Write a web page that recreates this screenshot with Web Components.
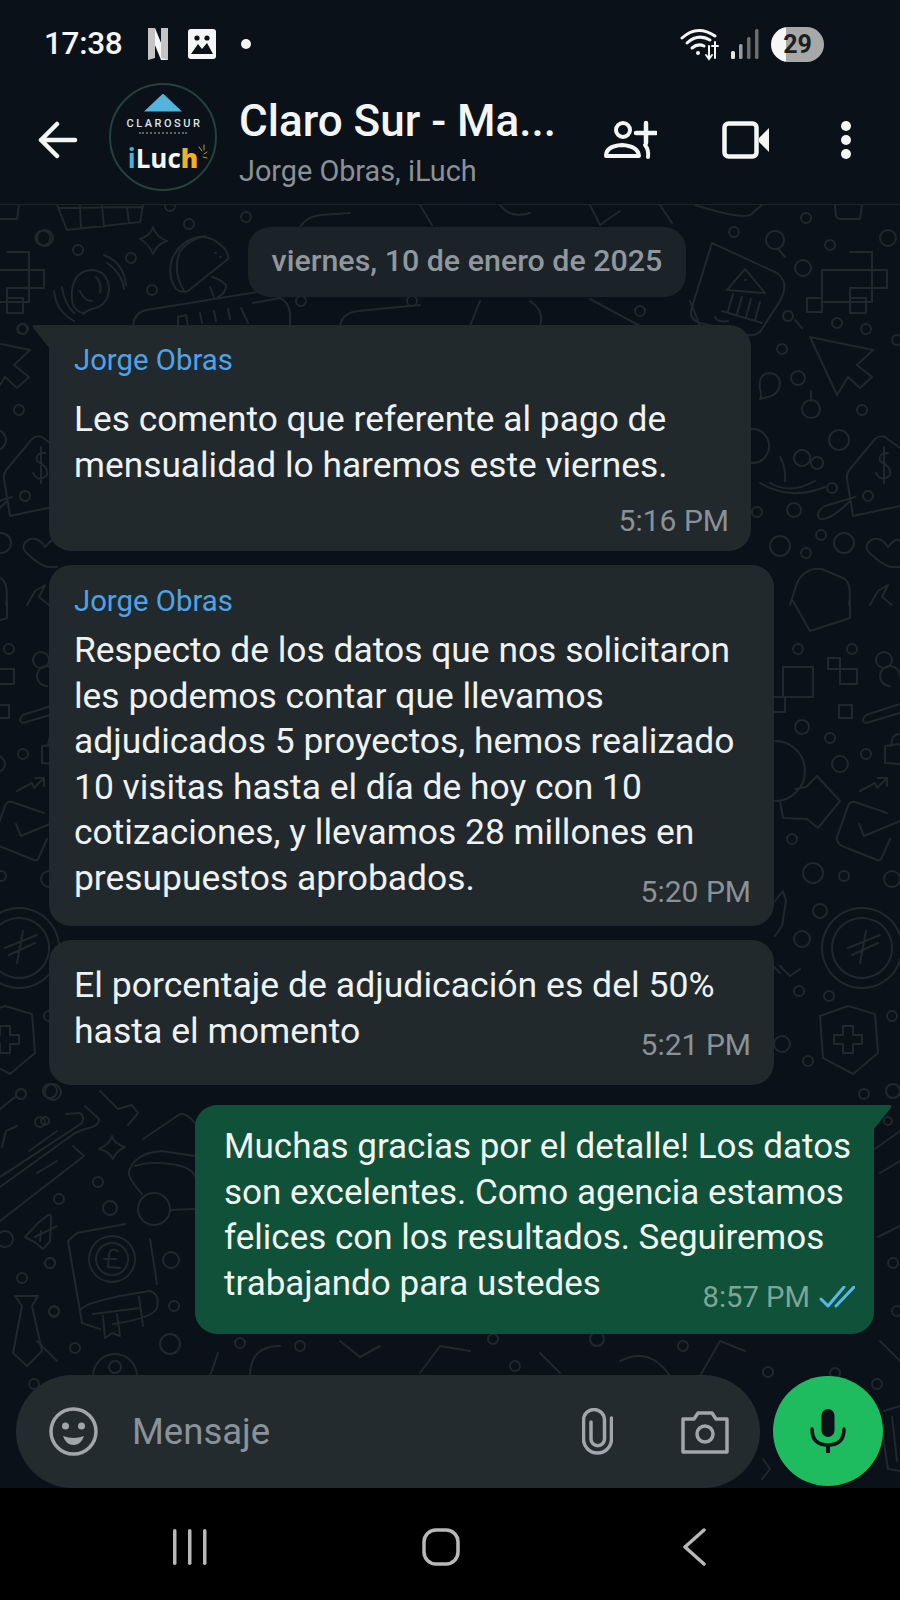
<!DOCTYPE html>
<html lang="es">
<head>
<meta charset="utf-8">
<title>Claro Sur</title>
<style>
    html, body { margin: 0; padding: 0; background: #000; }
    body { width: 900px; height: 1600px; overflow: hidden; font-family: Roboto, "Liberation Sans", sans-serif; }
    wa-app { height: 1600px; }
</style>
</head>
<body>
<wa-app>
    <status-bar></status-bar>
    <chat-header title="Claro Sur - Ma..." subtitle="Jorge Obras, iLuch"></chat-header>
    <chat-view>
        <date-chip>viernes, 10 de enero de 2025</date-chip>
        <msg-bubble sender="Jorge Obras" time="5:16 PM" tail stacked style="--w:702px; --mt:28px; --pt:17px; --sender-gap:19px; --fs:35.3px;">Les comento que referente al pago de<br>mensualidad lo haremos este viernes.</msg-bubble>
        <msg-bubble sender="Jorge Obras" time="5:20 PM" style="--w:725px; --mt:14px; --pt:18px; --sender-gap:9px; --fs:35.4px;">Respecto de los datos que nos solicitaron<br>les podemos contar que llevamos<br>adjudicados 5 proyectos, hemos realizado<br>10 visitas hasta el día de hoy con 10<br>cotizaciones, y llevamos 28 millones en<br>presupuestos aprobados.</msg-bubble>
        <msg-bubble time="5:21 PM" style="--w:725px; --mt:14px; --pt:23px; --pb:31px; --fs:35.6px;">El porcentaje de adjudicación es del 50%<br>hasta el momento</msg-bubble>
        <msg-bubble time="8:57 PM" out tail read style="--w:679px; --mt:20px; --pt:19px; --pb:28px; --fs:35px; --time-fs:29.2px;">Muchas gracias por el detalle! Los datos<br>son excelentes. Como agencia estamos<br>felices con los resultados. Seguiremos<br>trabajando para ustedes</msg-bubble>
        <input-bar placeholder="Mensaje"></input-bar>
    </chat-view>
    <nav-bar></nav-bar>
</wa-app>

<script>
class WaApp extends HTMLElement {
    constructor() {
        super();
        this.attachShadow({ mode: 'open' });
        this.shadowRoot.innerHTML = `
            <style>
                :host { display: flex; flex-direction: column; width: 900px; background: #0a1118; color: #eef1f2; }
            </style>
            <slot></slot>
        `;
    }
}

class StatusBar extends HTMLElement {
    constructor() {
        super();
        this.attachShadow({ mode: 'open' });
        this.shadowRoot.innerHTML = `
            <style>
                :host { display: flex; align-items: center; height: 62px; padding: 13px 76px 0 44px; box-sizing: content-box; }
                .time { font-size: 31.5px; font-weight: 500; color: #f4f5f5; letter-spacing: -0.3px; line-height: 38px; }
                .n { margin-left: 25px; }
                .pic { margin-left: 19px; }
                .dot { width: 10px; height: 10px; border-radius: 50%; background: #f4f5f5; margin-left: 25px; }
                .spacer { flex: 1; }
                .signal { margin-left: 10px; }
                .battery {
                    margin-left: 12px; width: 53px; height: 35px; border-radius: 18px;
                    background: linear-gradient(90deg, #f6f6f6 0, #f6f6f6 15px, #a8a8a8 15px);
                    color: #1b1f22; font-size: 25px; font-weight: 700; line-height: 35px; text-align: center;
                }
            </style>
            <span class="time">17:38</span>
            <svg class="n" width="22" height="34" viewBox="0 0 22 34">
                <path d="M1 1h7l13 32h-7z" fill="#f6f6f6"/>
                <path d="M1 1h7v30l-7 2z" fill="#c4c4c4"/>
                <path d="M14 1h7v32l-7-2z" fill="#c4c4c4"/>
            </svg>
            <svg class="pic" width="28" height="30" viewBox="0 0 28 30">
                <rect width="28" height="30" rx="3" fill="#f6f6f6"/>
                <circle cx="9" cy="9" r="2.6" fill="#0a1118"/><circle cx="19" cy="9" r="2.6" fill="#0a1118"/>
                <path d="M3 25 L10 15 L14 20 L19 14 L25 25 Z" fill="#0a1118"/>
            </svg>
            <span class="dot"></span>
            <span class="spacer"></span>
            <svg width="40" height="34" viewBox="0 0 40 34" fill="none" stroke="#f4f5f5" stroke-linecap="round">
                <path d="M2 11 Q17 -3 35 9" stroke-width="3"/>
                <path d="M7 16 Q18 6 30 13" stroke-width="3"/>
                <path d="M12 21 Q18 16 24 19" stroke-width="3"/>
                <circle cx="18" cy="26" r="2" fill="#f4f5f5" stroke="none"/>
                <path d="M29 19 V32 M26 28 L29 32 L32 28" stroke-width="2"/>
                <path d="M35 15 V31 M32 19 L38 19" stroke-width="2"/>
            </svg>
            <svg class="signal" width="29" height="30" viewBox="0 0 29 30">
                <rect x="1" y="22" width="4" height="8" rx="1.5" fill="#e6e6e6"/>
                <rect x="9" y="15" width="3.5" height="15" rx="1.5" fill="#9c9c9c"/>
                <rect x="17" y="8" width="3.5" height="22" rx="1.5" fill="#6d6d6d"/>
                <rect x="25" y="0" width="3.5" height="30" rx="1.5" fill="#6d6d6d"/>
            </svg>
            <span class="battery">29</span>
        `;
    }
}

class ChatHeader extends HTMLElement {
    constructor() {
        super();
        this.attachShadow({ mode: 'open' });
    }

    connectedCallback() {
        this.shadowRoot.innerHTML = `
            <style>
                :host { display: flex; align-items: center; height: 129px; padding: 0 0 0 38px; border-bottom: 1px solid #1c2329; position: relative; z-index: 2; background: #0a1118; }
                .avatar {
                    width: 108px; height: 108px; box-sizing: border-box; border-radius: 50%; border: 2px solid #26403d;
                    margin-left: 31px; margin-top: -6px; flex: none;
                    display: flex; flex-direction: column; align-items: center; padding-top: 9px;
                }
                .roof { width: 38px; height: 18px; background: #53b4de; clip-path: polygon(50% 0, 100% 100%, 0 100%); }
                .brand { font: 500 11px/14px Roboto, sans-serif; letter-spacing: 2.5px; color: #dfe3e4; margin-top: 5px; margin-right: -3px; }
                .tag { width: 48px; border-top: 2px dotted #5d6468; margin-top: 1px; }
                .iluch { font: 700 26px/30px "Liberation Sans Narrow", "Open Sans", Roboto, sans-serif; color: #f3f5f6; margin-top: 9px; display: flex; align-items: center; }
                .iluch i { font-style: normal; color: #46b3df; }
                .iluch b { color: #f0b12a; }
                .iluch svg { margin-right: -10px; margin-top: -8px; }
                .text { margin-left: 22px; margin-top: 6px; width: 334px; flex: none; display: flex; flex-direction: column; }
                .title { font-size: 44px; font-weight: 500; line-height: 48px; color: #f4f6f6; white-space: nowrap; }
                .sub { font-size: 28.8px; line-height: 34px; color: #8b9297; margin-top: 9px; white-space: nowrap; }
                .actions { display: flex; align-items: center; margin-left: 30px; }
                .video { margin-left: 65px; }
                .more { margin-left: 70px; }
                svg { display: block; }
            </style>
            <svg width="40" height="38" viewBox="0 0 40 38" fill="none" stroke="#f4f6f6" stroke-width="4.5" stroke-linecap="round" stroke-linejoin="round">
                <path d="M37 19 H3 M19 3 L3 19 L19 35"/>
            </svg>
            <div class="avatar">
                <div class="roof"></div>
                <div class="brand">CLAROSUR</div>
                <div class="tag"></div>
                <div class="iluch"><i>i</i>Luc<b>h</b>
                    <svg width="10" height="20" viewBox="0 0 10 20" fill="none" stroke="#b99a3a" stroke-width="1" stroke-linecap="round">
                        <path d="M1 3 L4 7 M6 1 L6 6 M9 8 L6 10 M9 14 L5 13"/>
                    </svg>
                </div>
            </div>
            <div class="text">
                <div class="title">${this.getAttribute('title')}</div>
                <div class="sub">${this.getAttribute('subtitle')}</div>
            </div>
            <div class="actions">
                <svg width="54" height="40" viewBox="0 0 54 40" fill="none" stroke="#f4f6f6" stroke-width="4" stroke-linecap="round">
                    <circle cx="20" cy="10" r="7"/>
                    <path d="M3 36 Q3 26 19 25 Q35 26 36 36 Z" stroke-linejoin="round"/>
                    <path d="M42 25 Q46 30 45 37"/>
                    <path d="M33 13 H53 M43 3 V23" stroke-width="4.5"/>
                </svg>
                <svg class="video" width="48" height="40" viewBox="0 0 48 40">
                    <rect x="2.5" y="3.5" width="32" height="33" rx="4" fill="none" stroke="#f4f6f6" stroke-width="4.5"/>
                    <path d="M37 18 L47 8 V32 L37 22 Z" fill="#f4f6f6"/>
                </svg>
                <svg class="more" width="12" height="38" viewBox="0 0 12 38" fill="#f4f6f6">
                    <circle cx="6" cy="5" r="5"/><circle cx="6" cy="19" r="5"/><circle cx="6" cy="33" r="5"/>
                </svg>
            </div>
        `;
    }
}

class ChatWallpaper extends HTMLElement {
    constructor() {
        super();
        this.attachShadow({ mode: 'open' });
    }

    connectedCallback() {
        // [x, y, r] of the small rings scattered over the pattern
        const rings = [
            [43,237,7.5],[78,249,5],[131,257,5],[189,223,5],[246,216,5],[152,289,5],[22,328,5],[170,205,5],
            [734,231,5],[806,217,5],[830,244,5],[803,267,8],[888,237,8],[837,322,5],[866,328,5],[782,348,5],
            [798,377,7],[862,409,5],[839,439,10],[832,487,5],[794,509,7],[757,511,5],[780,545,10],[821,534,5],
            [844,542,10],[806,552,5],[897,339,5],[798,648,5],[852,648,5],[884,659,8],[802,726,7],[830,737,5],
            [840,763,8],[866,753,5],[792,838,5],[813,872,10],[844,875,5],[892,878,8],[820,910,7],[802,938,8],
            [799,990,5],[829,995,5],[892,1015,5],[808,1060,5],[782,1043,8],[864,1093,5],[893,1090,7],
            [877,1383,5],[768,1371,5],[893,1262,5],[897,1310,5],[888,1120,4],
            [21,1093,5],[53,1091,8],[40,1121,5],[98,1181,5],[59,1198,5],[110,1207,7],[50,1262,5],[22,1277,5],
            [54,1311,5],[171,1259,8],[174,1305,5],[75,1347,5],[170,1343,10],[154,1208,16],[5,1238,8],
            [493,1338,5],[597,1338,7],[300,1345,5],[683,1345,5],[240,1342,5],[515,1365,5],[835,1372,5],
            [412,300,5],[640,310,5],[301,300,5]
        ];
        // outlines of the larger doodles, in page coordinates
        const shapes = [
            // top left: keyboard, sparkle, taco, speech ring, bar
            'M57 204 L67 229 L140 221 L143 204 M59 207 L143 206 M80 205 L81 228 M102 205 L104 226 M127 206 L129 222',
            'M153 226 Q156 236 167 240 Q157 243 153 253 Q149 243 140 238 Q150 235 153 226Z',
            'M176 288 Q167 275 172 258 Q180 240 198 236 Q212 234 225 248 Q229 254 228 258 L188 290 Q181 292 176 288Z M184 290 Q172 270 180 250 Q190 238 205 235 M215 252 h1 M220 256 h1 M212 276 Q220 278 226 284 Q226 292 218 296 M210 286 L214 296',
            'M84 312 Q70 310 72 290 Q74 270 92 269 Q108 270 109 288 Q108 305 92 308 Q88 309 83 313Z M80 290 Q84 300 92 300 M96 276 Q102 282 100 292 M107 262 Q122 272 124 288 M104 254 Q124 262 126 284 M54 290 Q56 310 74 320 M62 286 Q64 302 74 312',
            'M133 325 Q134 312 146 309 L257 291 M178 325 L178 316 L186 314 L188 325 M200 312 L202 322 M214 310 L216 320 M228 308 L230 318 M241 307 L248 322 M253 302 L280 297 Q288 300 290 312 L290 325',
            'M340 325 Q342 312 358 310 L420 304 M470 325 L480 300 M530 300 Q545 310 540 325 M590 298 L640 325 M690 300 L700 325',
            'M300 226 Q306 216 320 214 L350 212 M420 204 L432 224 M500 204 Q510 218 530 212 M590 204 L600 224 L620 210 M660 204 L672 222',
            // bank bulb, magnifier, pin
            'M712 242 L777 272 Q790 282 780 300 L760 331 Q752 337 740 332 L697 321 Q688 316 692 306 Z M695 204 Q740 218 750 214 L762 204',
            'M727 289 L745 268 L765 292 Z M733 293 L728 310 M742 296 L737 313 M751 298 L746 316 M760 301 L755 319 M722 310 L762 322 M715 316 Q718 322 728 320 M745 279 h1',
            'M775 230 a9 9 0 1 0 0.1 0 M778 248 L785 256 M788 310 a5 5 0 1 0 0.1 0 M795 319 L802 327',
            // right tetris, cursor
            'M850 251 H872 V301 H822 V269 H887 V287 H850 M807 297 H822 V311 H807 Z M850 297 H866 V312 H850 V287 M835 204 L836 215 Q837 218 840 218 L860 218 L862 204',
            'M810 336 L873 349 L857 364 L872 376 L860 387 L848 376 L837 394 Z',
            'M768 372 Q780 372 780 384 Q778 394 768 396 L760 398 Q762 394 760 388 Q758 374 768 372Z',
            'M802 408 a9 9 0 1 0 18 0.1 a9 9 0 1 0 -18 -0.1 M811 390 V400',
            'M752 428 a17 17 0 1 0 0.1 0 M780 456 Q786 466 785 480 M770 482 Q790 494 815 480 M760 482 Q790 500 825 486',
            'M802 449 a8 8 0 1 0 0.1 0 M817 456 a6 6 0 1 0 0.1 0',
            'M900 447 L885 436 Q880 434 875 438 L850 468 Q846 473 847 478 L853 515 L900 505 M855 496 L825 505 Q814 512 820 518 Q830 520 850 500 M868 490 a5 5 0 1 0 0.1 0 M888 452 Q878 452 880 460 Q892 466 890 474 Q882 482 876 472 M884 446 L884 482',
            'M873 555 Q860 545 873 538 Q882 536 888 546 Q896 536 900 540 M900 566 L890 566 Q880 562 873 555',
            'M790 604 L797 582 Q805 566 822 568 L845 578 Q852 584 849 604 M870 604 L878 590 L888 584 L882 596 L892 604',
            // lower right column
            'M793 600 L810 630 L850 617 L850 600',
            'M828 657 H840 V668 H857 V683 H840 V668 H828 Z M783 666 H813 V696 H783 Z M773 696 H785 V711 H773 Z M839 704 H852 V717 H839 Z',
            'M900 703 L866 714 Q860 720 866 722 L900 712 M900 675 a10 10 0 1 0 -10 10',
            'M885 745 L900 743 M885 745 L885 762 L900 763 M891 745 Q892 733 899 733',
            'M860 790 L875 782 L877 787 L887 777 M878 777 H887 V785',
            'M817 775 L840 800 L818 827 L807 818 L783 817 L780 800 M796 788 L806 786 L817 775 M775 740 a30 30 0 0 1 0 60',
            'M887 812 L855 801 Q850 800 848 805 L837 836 Q836 842 842 845 L877 859 Q881 860 882 856 L890 838 M859 823 L864 835 L900 820',
            'M862 907 a40 40 0 1 0 0.1 0 M862 917 a30 30 0 1 0 0.1 0 M866 930 L860 962 M848 947 L880 934 M852 954 L878 942',
            'M820 1015 L848 1005 L875 1013 L878 1052 L853 1073 L823 1057 Z M843 1025 h10 v9 h9 v9 h-9 v9 h-10 v-9 h-9 v-9 h9 z',
            'M775 900 L783 890 L786 900 L782 925 L775 935 M780 965 L790 975 L800 968 M770 962 L780 972',
            // bottom left
            'M0 1176 L82 1122 Q85 1116 80 1112 L66 1113 M0 1186 L75 1132 L85 1128 Q100 1125 99 1118 L85 1105 M5 1173 L70 1130 M73 1145 L84 1155 L0 1220',
            'M15 1096 L0 1108 M17 1125 L6 1130 L2 1146 M100 1090 L118 1108 L132 1104 L138 1112 L128 1124',
            'M25 1236 L38 1222 L48 1214 Q52 1212 51 1222 L50 1240 L43 1248 L36 1242 Z M41 1230 L40 1240',
            'M112 1135 Q114 1143 125 1146 Q116 1150 113 1158 Q109 1150 99 1148 Q109 1144 112 1135Z',
            'M125 1223 L77 1232 L68 1240 L82 1322 L100 1328 M150 1238 L157 1283 M80 1310 Q83 1300 150 1290 Q160 1293 157 1307 Q153 1317 113 1323 M93 1313 L140 1307 M103 1315 L105 1337 L112 1332 L120 1335 L117 1313 M139 1296 L143 1325',
            'M112 1235 a23 23 0 1 0 0.1 0 M112 1242 a16 16 0 1 0 0.1 0 M118 1250 Q110 1246 109 1254 L108 1266 L120 1267 M104 1258 L116 1258',
            'M15 1295 H38 L32 1305 L42 1350 L27 1365 L13 1352 L22 1305 Z',
            'M143 1138 L180 1113 Q187 1112 195 1122 M142 1193 Q127 1176 129 1170 Q135 1152 162 1150 L195 1155 M195 1175 Q190 1165 170 1163 Q150 1160 135 1165 M170 1209 L195 1208',
            'M93 1375 a22 22 0 1 1 44 0 M109 1366 a6 6 0 1 0 12 0 a6 6 0 1 0 -12 0',
            // strip above the input and around the mic
            'M210 1375 L218 1352 M250 1375 Q250 1345 280 1345 M340 1340 L360 1356 L380 1345 M420 1372 L440 1345 L470 1350 M540 1352 L560 1372 M620 1360 Q650 1345 670 1375 M700 1375 L720 1340 L745 1350',
            'M884 1410 L900 1405 M882 1430 L888 1468 L900 1470 M892 1416 L897 1460',
            'M763 1458 L770 1468 L762 1478 M872 1150 L900 1130 M880 1172 L900 1160 M878 1236 L900 1225 M880 1340 L900 1360'
        ];
        const d = shapes.join(' ');
        this.shadowRoot.innerHTML = `
            <style>
                :host { position: absolute; inset: 0; display: block; overflow: hidden; pointer-events: none; }
                svg { display: block; }
            </style>
            <svg width="900" height="1284" viewBox="0 204 900 1284" fill="none" stroke="#20282e" stroke-width="2" stroke-linecap="round" stroke-linejoin="round">
                <g id="p">
                    <path d="${d}"/>
                    ${rings.map(([x, y, r]) => `<circle cx="${x}" cy="${y}" r="${r}"/>`).join('')}
                </g>
                <use href="#p" x="-843"/>
            </svg>
        `;
    }
}

class ChatView extends HTMLElement {
    constructor() {
        super();
        this.attachShadow({ mode: 'open' });
        this.shadowRoot.innerHTML = `
            <style>
                :host { display: flex; flex-direction: column; flex: 1; min-height: 0; position: relative; overflow: hidden; padding-top: 22px; }
                ::slotted(*) { position: relative; }
            </style>
            <chat-wallpaper></chat-wallpaper>
            <slot></slot>
        `;
    }
}

class DateChip extends HTMLElement {
    constructor() {
        super();
        this.attachShadow({ mode: 'open' });
        this.shadowRoot.innerHTML = `
            <style>
                :host { display: block; align-self: center; height: 70px; line-height: 68px; padding: 0 24px; border-radius: 22px; background: #1b2328; color: #90989d; font-size: 30.4px; font-weight: 500; white-space: nowrap; margin-left: 34px; }
            </style>
            <slot></slot>
        `;
    }
}

class MsgBubble extends HTMLElement {
    constructor() {
        super();
        this.attachShadow({ mode: 'open' });
    }

    connectedCallback() {
        const sender = this.getAttribute('sender');
        const out = this.hasAttribute('out');
        const read = this.hasAttribute('read');
        this.shadowRoot.innerHTML = `
            <style>
                :host {
                    display: grid; box-sizing: border-box; flex: none;
                    width: var(--w); margin-top: var(--mt, 14px);
                    margin-left: 49px; padding: var(--pt, 16px) 23px var(--pb, 25px) 25px;
                    background: #22292d; border-radius: 22px; color: #eff2f2;
                }
                :host([out]) {
                    margin-left: 195px; padding: var(--pt, 16px) 19px var(--pb, 25px) 29px;
                    background: #10513a; color: #f0f5f2;
                }
                :host([stacked]) { padding-bottom: 13px; padding-right: 22px; }
                :host([tail]) { border-top-left-radius: 0; }
                :host([out][tail]) { border-top-left-radius: 22px; border-top-right-radius: 0; }
                .tail { position: absolute; top: 0; left: -17px; }
                :host([out]) .tail { left: auto; right: -18px; transform: scaleX(-1); }
                .sender { grid-area: 1 / 1; font-size: 29.3px; line-height: 36px; color: #4fa3e8; margin-bottom: var(--sender-gap, 0); }
                .body { grid-area: 2 / 1; font-size: var(--fs, 35px); line-height: 45.5px; white-space: nowrap; }
                .meta { grid-area: 2 / 1; justify-self: end; align-self: end; display: flex; align-items: center; gap: 9px; font-size: var(--time-fs, 30px); line-height: 34px; color: #8a9297; margin-bottom: -8px; }
                :host([out]) .meta { color: #7fa596; }
                :host([stacked]) .meta { grid-area: 3 / 1; margin: 16px 0 0; }
            </style>
            ${this.hasAttribute('tail') ? `
                <svg class="tail" width="18" height="24" viewBox="0 0 18 24">
                    <path d="M18 0 H3 Q-1 0 2 4 L18 24 Z" fill="${out ? '#10513a' : '#22292d'}"/>
                </svg>` : ''}
            ${sender ? `<div class="sender">${sender}</div>` : ''}
            <div class="body"><slot></slot></div>
            <div class="meta">
                <span>${this.getAttribute('time')}</span>
                ${read ? `<svg width="36" height="22" viewBox="0 0 36 22" fill="none" stroke="#57b8ea" stroke-width="3" stroke-linecap="round" stroke-linejoin="round">
                    <path d="M2 13 L9 20 L25 1 M17 20 L35 1"/>
                </svg>` : ''}
            </div>
        `;
    }
}

class InputBar extends HTMLElement {
    constructor() {
        super();
        this.attachShadow({ mode: 'open' });
    }

    connectedCallback() {
        this.shadowRoot.innerHTML = `
            <style>
                :host { display: flex; align-items: center; gap: 13px; margin-top: auto; padding: 0 17px 0 16px; height: 113px; flex: none; }
                .field {
                    flex: 1; height: 113px; border-radius: 57px; background: #232b2f;
                    display: flex; align-items: center; padding: 0 31px 0 33px; box-sizing: border-box;
                }
                .text { font-size: 36.5px; color: #8a9398; margin-left: 34px; flex: 1; }
                .clip { margin-right: 68px; }
                .mic { width: 110px; height: 110px; border-radius: 50%; background: #1fbb5f; display: flex; align-items: center; justify-content: center; flex: none; margin-bottom: 1px; }
                svg { display: block; flex: none; }
            </style>
            <div class="field">
                <svg width="49" height="49" viewBox="0 0 49 49">
                    <circle cx="24.5" cy="24.5" r="22.5" fill="none" stroke="#a0a6a9" stroke-width="3.5"/>
                    <circle cx="16.5" cy="19" r="3.5" fill="#a0a6a9"/><circle cx="32.5" cy="19" r="3.5" fill="#a0a6a9"/>
                    <path d="M14 29 Q24.5 33 35 29 Q32 38 24.5 38 Q17 38 14 29Z" fill="#a0a6a9"/>
                </svg>
                <span class="text">${this.getAttribute('placeholder')}</span>
                <svg class="clip" width="31" height="47" viewBox="0 0 31 47" fill="none" stroke="#a0a6a9" stroke-width="3.5" stroke-linecap="round">
                    <path d="M29.5 10 V31 A14 14 0 0 1 1.5 31 V12 A10.5 10.5 0 0 1 22.5 12 V31 A6.7 6.7 0 0 1 9 31 V14"/>
                </svg>
                <svg width="48" height="44" viewBox="0 0 48 44" fill="none" stroke="#a0a6a9" stroke-width="3.5" stroke-linejoin="round">
                    <path d="M2 42 V9 H13 L17 3 H31 L35 9 H46 V42 Z"/>
                    <circle cx="24" cy="24" r="8"/>
                </svg>
            </div>
            <div class="mic">
                <svg width="36" height="46" viewBox="0 0 36 46" fill="none" stroke="#0a1118">
                    <rect x="11.5" y="1" width="13" height="28" rx="6.5" fill="#0a1118" stroke="none"/>
                    <path d="M2 21 Q2 37 18 37 Q34 37 34 21" stroke-width="3.5" stroke-linecap="round"/>
                    <path d="M18 37 V45" stroke-width="4"/>
                </svg>
            </div>
        `;
    }
}

class NavBar extends HTMLElement {
    constructor() {
        super();
        this.attachShadow({ mode: 'open' });
        this.shadowRoot.innerHTML = `
            <style>
                :host { display: flex; align-items: flex-start; justify-content: center; height: 112px; background: #000; flex: none; padding-top: 40px; box-sizing: border-box; position: relative; z-index: 2; }
                svg { display: block; flex: none; }
                .home { margin-left: 215px; }
                .back { margin-left: 222px; margin-right: 196px; }
                .recent { margin-left: 174px; }
            </style>
            <svg class="recent" width="34" height="38" viewBox="0 0 34 38" fill="#b8b8b8">
                <rect x="0" y="1" width="3.5" height="36" rx="1.7"/><rect x="15" y="1" width="3.5" height="36" rx="1.7"/><rect x="30" y="1" width="3.5" height="36" rx="1.7"/>
            </svg>
            <svg class="home" width="38" height="38" viewBox="0 0 38 38">
                <rect x="2" y="2" width="34" height="34" rx="12" fill="none" stroke="#b8b8b8" stroke-width="3.5"/>
            </svg>
            <svg class="back" width="24" height="38" viewBox="0 0 24 38" fill="none" stroke="#b8b8b8" stroke-width="3.5" stroke-linecap="round" stroke-linejoin="round">
                <path d="M22 2 L3 19 L22 36"/>
            </svg>
        `;
    }
}

customElements.define('wa-app', WaApp);
customElements.define('status-bar', StatusBar);
customElements.define('chat-header', ChatHeader);
customElements.define('chat-wallpaper', ChatWallpaper);
customElements.define('chat-view', ChatView);
customElements.define('date-chip', DateChip);
customElements.define('msg-bubble', MsgBubble);
customElements.define('input-bar', InputBar);
customElements.define('nav-bar', NavBar);
</script>
</body>
</html>
